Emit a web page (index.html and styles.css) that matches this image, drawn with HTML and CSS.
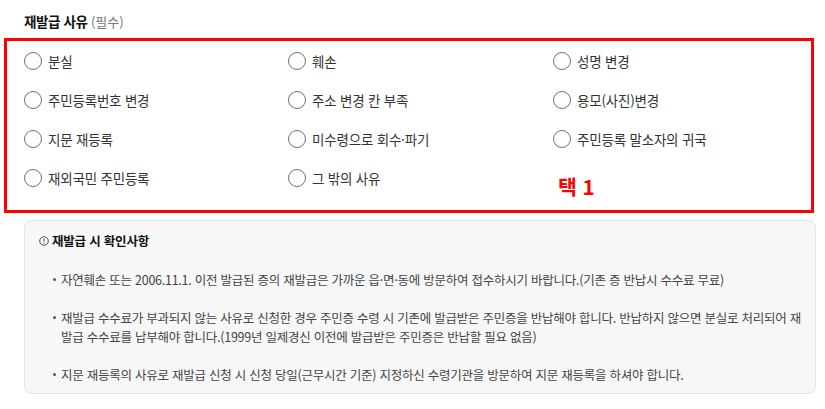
FILE: index.html
```html
<!DOCTYPE html>
<html lang="ko">
<head>
<meta charset="utf-8">
<title>재발급 사유</title>
<link rel="stylesheet" href="styles.css">
</head>
<body>
<h2 class="heading">재발급 사유 <span class="req">(필수)</span></h2>
<div class="reasons">
  <label class="opt"><input type="radio" name="r" class="radio"><span>분실</span></label>
  <label class="opt"><input type="radio" name="r" class="radio"><span>훼손</span></label>
  <label class="opt"><input type="radio" name="r" class="radio"><span>성명 변경</span></label>
  <label class="opt"><input type="radio" name="r" class="radio"><span>주민등록번호 변경</span></label>
  <label class="opt"><input type="radio" name="r" class="radio"><span>주소 변경 칸 부족</span></label>
  <label class="opt"><input type="radio" name="r" class="radio"><span>용모(사진)변경</span></label>
  <label class="opt"><input type="radio" name="r" class="radio"><span>지문 재등록</span></label>
  <label class="opt"><input type="radio" name="r" class="radio"><span>미수령으로 회수·파기</span></label>
  <label class="opt"><input type="radio" name="r" class="radio"><span>주민등록 말소자의 귀국</span></label>
  <label class="opt"><input type="radio" name="r" class="radio"><span>재외국민 주민등록</span></label>
  <label class="opt"><input type="radio" name="r" class="radio"><span>그 밖의 사유</span></label>
  <div class="tag">택 1</div>
</div>
<div class="notice">
  <h3 class="notice-title"><svg class="notice-icon" width="10" height="10" viewBox="0 0 10 10"><circle cx="5" cy="5" r="4.3" fill="none" stroke="#555" stroke-width="1"/><line x1="5" y1="2.6" x2="5" y2="5.6" stroke="#555" stroke-width="1.1"/><circle cx="5" cy="7.2" r="0.6" fill="#555"/></svg>재발급 시 확인사항</h3>
  <ul class="notice-list">
    <li>자연훼손 또는 2006.11.1. 이전 발급된 증의 재발급은 가까운 읍·면·동에 방문하여 접수하시기 바랍니다.(기존 증 반납시 수수료 무료)</li>
    <li>재발급 수수료가 부과되지 않는 사유로 신청한 경우 주민증 수령 시 기존에 발급받은 주민증을 반납해야 합니다. 반납하지 않으면 분실로 처리되어 재발급 수수료를 납부해야 합니다.(1999년 일제경신 이전에 발급받은 주민증은 반납할 필요 없음)</li>
    <li>지문 재등록의 사유로 재발급 신청 시 신청 당일(근무시간 기준) 지정하신 수령기관을 방문하여 지문 재등록을 하셔야 합니다.</li>
  </ul>
</div>
</body>
</html>
```

FILE: styles.css
```css
* { box-sizing: border-box; }
html, body { margin: 0; padding: 0; background: #fff; }
body {
  font-family: "Noto Sans CJK KR", "Malgun Gothic", sans-serif;
  color: #333;
  padding-top: 11px;
}
.heading {
  margin: 0 0 6px 24px;
  font-size: 13.5px;
  line-height: 20px;
  font-weight: 700;
  color: #111;
  letter-spacing: -0.4px;
}
.req {
  font-weight: 400;
  font-size: 13px;
  color: #777;
  letter-spacing: 0;
}
.reasons {
  margin-left: 4px;
  width: 810px;
  height: 175px;
  border: 3px solid #ff0000;
  padding: 10px 0 0 17px;
  display: grid;
  grid-template-columns: 264px 265px 1fr;
  row-gap: 19px;
  align-content: start;
}
.opt {
  display: flex;
  align-items: center;
  gap: 6px;
  height: 20px;
  font-size: 13.5px;
  letter-spacing: -0.2px;
  color: #333;
  cursor: pointer;
}
.radio {
  appearance: none;
  -webkit-appearance: none;
  margin: 0;
  width: 18px;
  height: 18px;
  border: 1.3px solid #707070;
  border-radius: 50%;
  background: #fff;
  flex: none;
}
.tag {
  color: #ff0000;
  font-weight: 700;
  font-size: 20.5px;
  line-height: 24px;
  margin-top: 6px;
  padding-left: 5px;
}
.notice {
  margin: 7px 0 0 24px;
  width: 792px;
  height: 174px;
  background: #f7f7f7;
  border: 1px solid #e4e4e4;
  border-radius: 8px;
  padding: 11px 9px 0 13px;
}
.notice-title {
  margin: 0;
  display: flex;
  align-items: center;
  gap: 3px;
  font-size: 12.5px;
  line-height: 18px;
  font-weight: 700;
  color: #111;
  letter-spacing: -0.2px;
}
.notice-icon { flex: none; margin-left: 1px; }
.notice-list {
  list-style: none;
  margin: 20px 0 0;
  padding: 0 0 0 15px;
  display: flex;
  flex-direction: column;
  gap: 19px;
}
.notice-list li {
  position: relative;
  padding-left: 8px;
  font-size: 12.5px;
  line-height: 19px;
  color: #444;
  letter-spacing: -0.25px;
}
.notice-list li::before {
  content: "";
  position: absolute;
  left: 0;
  top: 8px;
  width: 3px;
  height: 3px;
  border-radius: 50%;
  background: #555;
}
```
